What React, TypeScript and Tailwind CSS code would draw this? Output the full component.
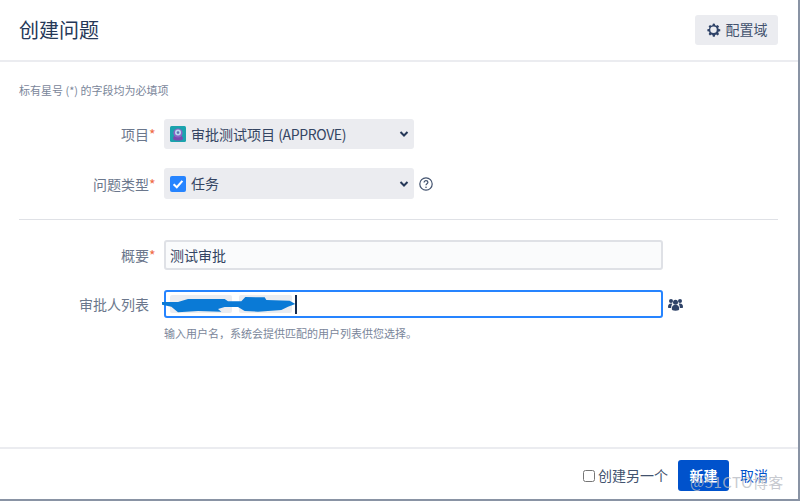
import React from "react";

const font = { fontFamily: '"Noto Sans CJK SC", "Liberation Sans", sans-serif' };

function Chevron() {
  return (
    <svg width="10" height="7" viewBox="0 0 10 7" className="absolute right-[5px] top-1/2 -translate-y-1/2">
      <path d="M1.5 1.5 L5 5 L8.5 1.5" fill="none" stroke="#253858" strokeWidth="2" />
    </svg>
  );
}

function Gear() {
  return (
    <svg width="15" height="15" viewBox="0 0 24 24">
      <path
        d="M12 2.5l2 .2.7 2.6 1.7.7 2.3-1.4 2.2 2.4-1.4 2.2.7 1.8 2.6.6v3l-2.6.6-.7 1.8 1.4 2.2-2.2 2.2-2.3-1.3-1.7.7-.7 2.6h-3l-.7-2.6-1.7-.7-2.3 1.3-2.1-2.2 1.3-2.2-.7-1.8-2.6-.6v-3l2.6-.6.7-1.8-1.3-2.2 2.1-2.4 2.3 1.4 1.7-.7.7-2.6z"
        fill="#2f4368"
      />
      <circle cx="12" cy="12.5" r="5.2" fill="#ebecf0" />
    </svg>
  );
}

function ProjectIcon() {
  return (
    <svg width="16" height="16" viewBox="0 0 16 16" className="shrink-0">
      <rect width="16" height="16" rx="1.5" fill="#1ba3ad" />
      <ellipse cx="8" cy="12" rx="5" ry="2.6" fill="#7a4bb0" />
      <circle cx="8" cy="7" r="4.6" fill="#8d63c4" />
      <circle cx="8" cy="6.6" r="3" fill="#b9d9ee" />
      <circle cx="8" cy="6.6" r="1.3" fill="#5b6fb5" />
    </svg>
  );
}

function TaskIcon() {
  return (
    <svg width="16" height="16" viewBox="0 0 16 16" className="shrink-0">
      <rect width="16" height="16" rx="2" fill="#2684ff" />
      <path d="M3.6 8.2 L6.8 11.2 L12.4 4.9" fill="none" stroke="#ffffff" strokeWidth="2.1" />
    </svg>
  );
}

function Help() {
  return (
    <svg width="14" height="14" viewBox="0 0 14 14" className="ml-[5px] shrink-0">
      <circle cx="7" cy="7" r="6.2" fill="none" stroke="#42526e" strokeWidth="1.2" />
      <path d="M5.1 5.4c0-1.1.9-1.8 1.9-1.8s1.9.7 1.9 1.7c0 1.5-1.9 1.4-1.9 3" fill="none" stroke="#42526e" strokeWidth="1.2" />
      <circle cx="7" cy="10.2" r="0.8" fill="#42526e" />
    </svg>
  );
}

function Users() {
  return (
    <svg width="15" height="13" viewBox="0 0 15 13" className="ml-[5px] shrink-0">
      <g fill="#2f4368">
        <circle cx="3" cy="3" r="2" />
        <circle cx="12" cy="3" r="2" />
        <path d="M0 9c0-2.4 1-3.6 3-3.6 1 0 1.5.3 1.5.3C3.6 6.700 3.200 8 3.200 10H1C.4 10 0 9.600 0 9z" />
        <path d="M15 9c0-2.400-1-3.600-3-3.600-1 0-1.500.3-1.500.3.900 1 1.300 2.300 1.300 4.300H14c.6 0 1-.4 1-1z" />
        <circle cx="7.500" cy="4.200" r="2.500" />
        <path d="M3.800 11c0-3 1.300-4.300 3.700-4.300s3.700 1.300 3.700 4.300c0 1-1 1.700-3.700 1.700S3.800 12 3.800 11z" />
      </g>
    </svg>
  );
}

function Label({ text, required }: { text: string; required?: boolean }) {
  return (
    <div className="w-[135px] mr-[15px] shrink-0 flex justify-end text-[14px] text-[#6b778c] leading-none">
      <span>{text}</span>
      {required ? <span className="text-[#ef6a45] w-0 overflow-visible">*</span> : null}
    </div>
  );
}

export default function App() {
  return (
    <div className="relative w-[800px] h-[501px] bg-white overflow-hidden flex flex-col" style={font}>
      <div className="h-[499px] w-[798px] flex flex-col">
        <header className="h-[62px] shrink-0 border-b-2 border-[#ebecf0] flex items-center justify-between pl-[19px] pr-[20px]">
          <h1 className="text-[20px] text-[#253858] font-normal leading-none">创建问题</h1>
          <button className="w-[83px] h-[30px] rounded-[3px] bg-[#ebecf0] flex items-center justify-center gap-[5px] text-[14px] text-[#42526e] -mt-[1px]">
            <Gear />
            <span>配置域</span>
          </button>
        </header>

        <main className="flex-1 flex flex-col">
          <p className="mt-[21px] ml-[19px] text-[11px] leading-[14px] text-[#7a869a]">标有星号 (*) 的字段均为必填项</p>

          <div className="mt-[22px] flex items-center pl-[14px]">
            <Label text="项目" required />
            <div className="relative w-[250px] h-[30px] rounded-[3px] bg-[#ebecf0] flex items-center gap-[5px] pl-[6px] text-[14px] text-[#344563]">
              <ProjectIcon />
              <span>
                审批测试项目 <span className="tracking-[-0.35px]">(APPROVE)</span>
              </span>
              <Chevron />
            </div>
          </div>

          <div className="mt-[19px] flex items-center pl-[14px]">
            <Label text="问题类型" required />
            <div className="relative w-[250px] h-[31px] rounded-[3px] bg-[#ebecf0] flex items-center gap-[5px] pl-[6px] text-[14px] text-[#344563]">
              <TaskIcon />
              <span>任务</span>
              <Chevron />
            </div>
            <Help />
          </div>

          <div className="mt-[20px] ml-[19px] mr-[20px] h-[1px] bg-[#dfe1e6]" />

          <div className="mt-[20px] flex items-center pl-[14px]">
            <Label text="概要" required />
            <div className="w-[499px] h-[30px] rounded-[3px] bg-[#fafbfc] border-2 border-[#dfe1e6] flex items-center pl-[4px] text-[14px] text-[#344563]">
              测试审批
            </div>
          </div>

          <div className="mt-[20px] flex items-center pl-[14px]">
            <Label text="审批人列表" />
            <div className="relative w-[499px] h-[28px] rounded-[3px] bg-white border-2 border-[#2684ff] flex items-center pl-[4px]">
              <span className="w-[62px] h-[18px] rounded-[2px] bg-[#ebecf0]" />
              <span className="ml-[7px] w-[53px] h-[18px] rounded-[2px] bg-[#ebecf0]" />
              <span className="ml-[3px] w-[2px] h-[19px] bg-[#172b4d]" />
              <svg width="145" height="34" viewBox="0 0 435 102" className="absolute -left-[8px] -top-[4px]">
                <path
                  d="M12 42 L60 42 L90 33 L200 33 L210 40 L250 40 L262 27 L320 28 L325 36 L395 38 L412 48 L390 56 L370 66 L300 71 L260 69 L240 57 L200 57 L180 63 L190 71 L120 69 L60 73 L40 56 L12 50 Z"
                  fill="#0a7ad6"
                />
              </svg>
            </div>
            <Users />
          </div>

          <p className="mt-[8px] ml-[164px] text-[11px] leading-[14px] text-[#7a869a]">
            输入用户名，系统会提供匹配的用户列表供您选择。
          </p>
        </main>

        <footer className="h-[52px] shrink-0 border-t-2 border-[#ebecf0] flex items-center justify-end pr-[30px] pt-[3px] text-[14px]">
          <input type="checkbox" readOnly className="w-[12px] h-[12px] mr-[3px]" />
          <span className="text-[#42526e]">创建另一个</span>
          <button className="ml-[10px] w-[51px] h-[31px] rounded-[3px] bg-[#0052cc] text-white font-bold">新建</button>
          <a className="ml-[11px] text-[#0052cc]">取消</a>
        </footer>
      </div>

      <div className="absolute right-0 top-0 bottom-0 w-[2px] bg-[#8993a4]" />
      <div className="absolute left-0 right-0 bottom-0 h-[2px] bg-[#8993a4]" />
      <span className="absolute left-[690px] top-[474px] text-[15px] leading-[16px] tracking-[0.5px] text-[#b8bcc4]/80 whitespace-nowrap">@51CTO博客</span>
    </div>
  );
}
